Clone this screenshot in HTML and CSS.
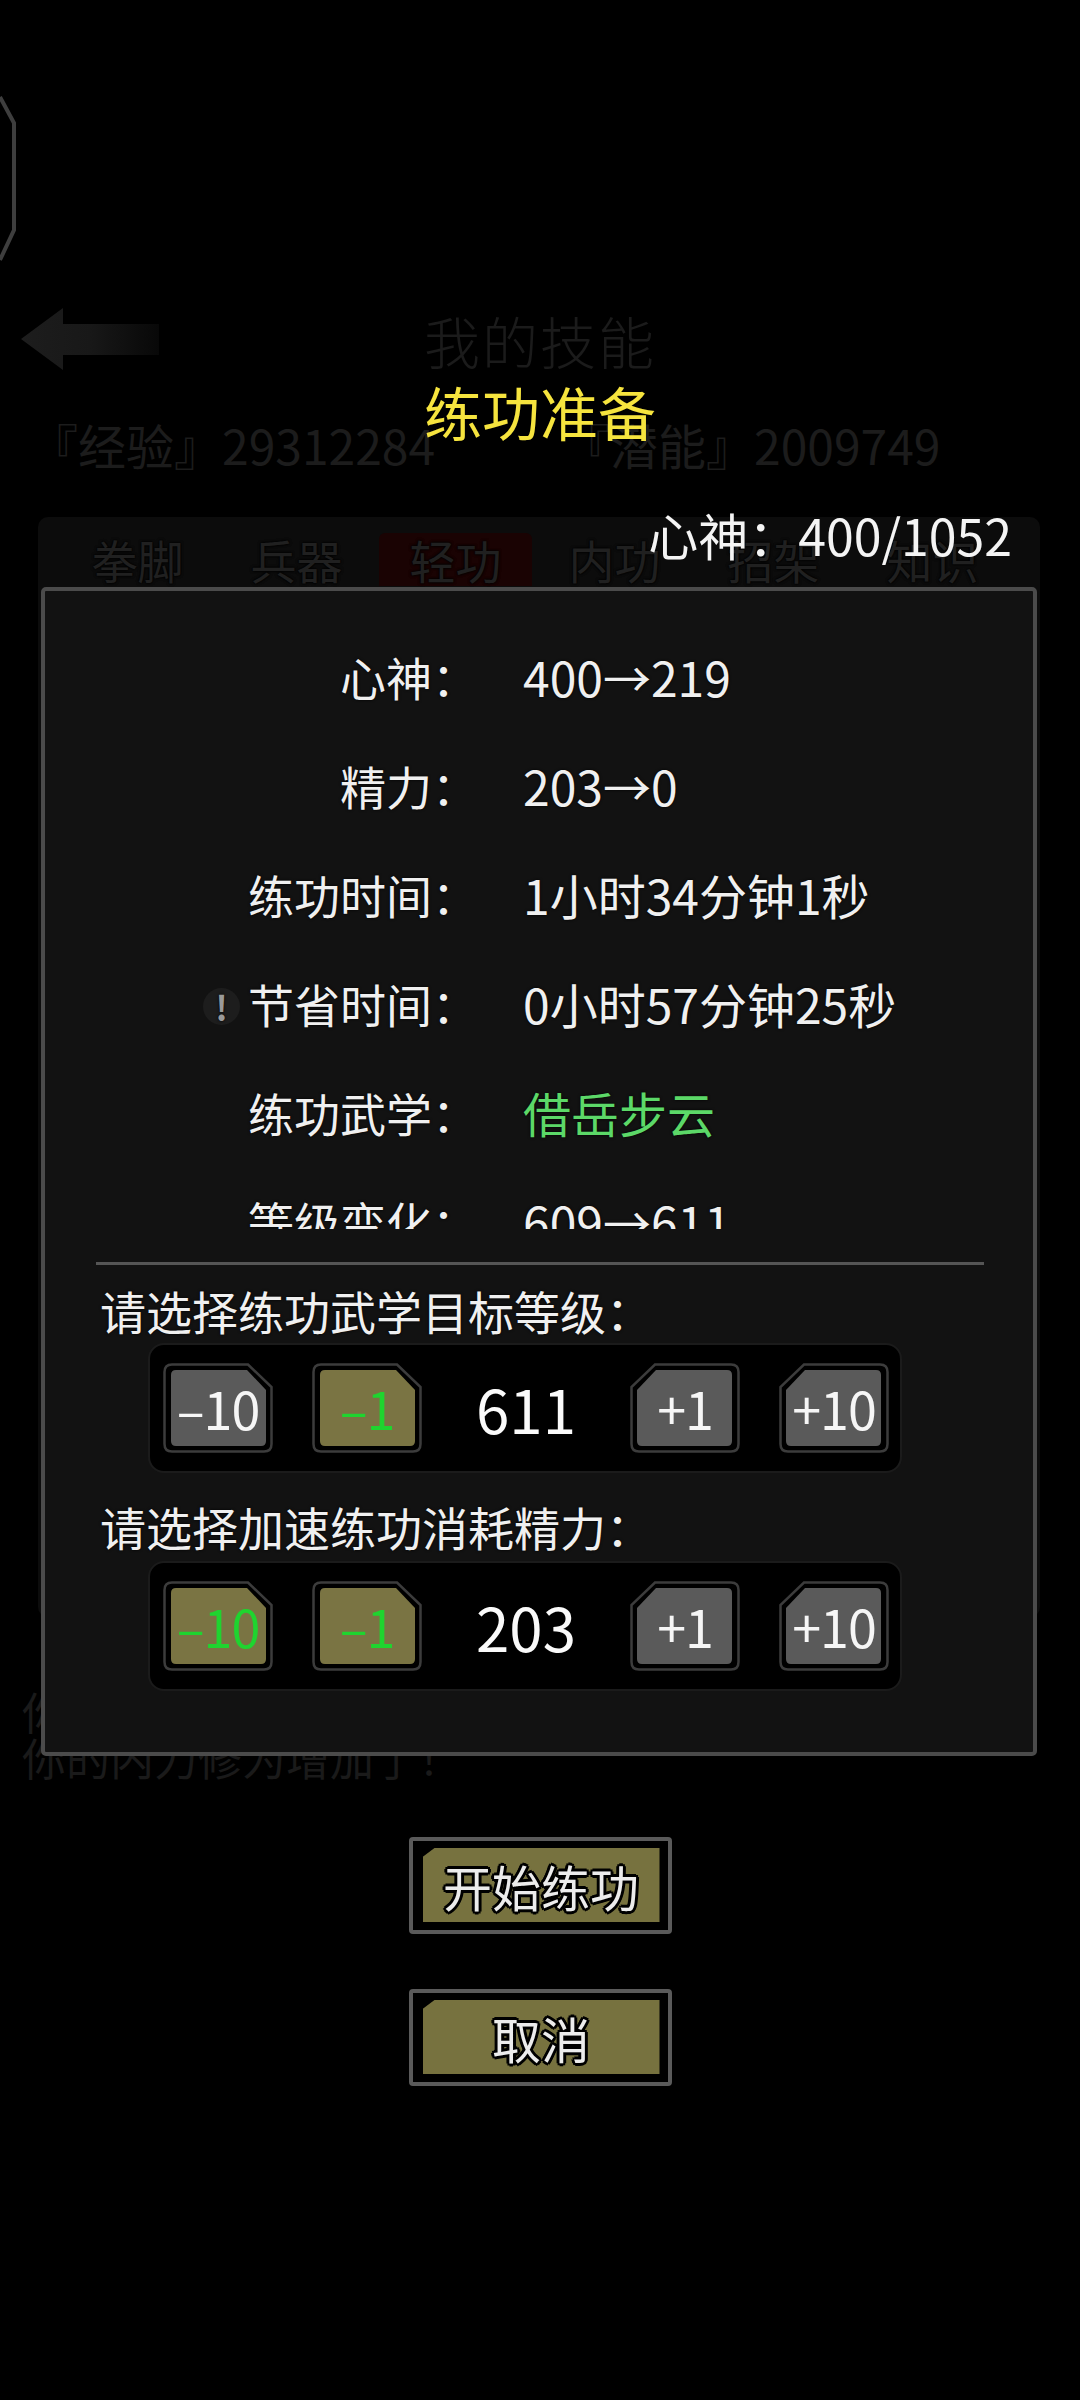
FILE: index.html
```html
<!DOCTYPE html>
<html lang="zh-CN">
<head>
  <meta charset="UTF-8">
  <meta name="viewport" content="width=device-width, initial-scale=1.0">
  <title>练功准备</title>
  <link rel="stylesheet" href="styles.css">
</head>
<body>
  <!-- dimmed game screen under the dialog -->
  <div class="screen">
    <svg class="edge" width="20" height="175" viewBox="0 0 20 175">
      <path d="M0 7 L14 33 V140 L0 170" fill="none" stroke="#3e3e3e" stroke-width="4"/>
    </svg>

    <header class="topbar">
      <svg class="back" width="140" height="64" viewBox="0 0 140 64">
        <defs>
          <linearGradient id="fade" x1="0" x2="1" y1="0" y2="0">
            <stop offset="0" stop-color="#1d1d1d"/>
            <stop offset="0.5" stop-color="#181818"/>
            <stop offset="1" stop-color="#080808"/>
          </linearGradient>
        </defs>
        <path d="M0 31 L42 0 V16 H138 V47 H42 V62 Z" fill="url(#fade)"/>
      </svg>
      <h1>我的技能</h1>
    </header>

    <div class="stats">
      <span>『经验』29312284</span>
      <span>『潜能』2009749</span>
    </div>

    <section class="tabs-box">
      <nav class="tabs">
        <span>拳脚</span>
        <span>兵器</span>
        <span class="on">轻功</span>
        <span>内功</span>
        <span>招架</span>
        <span>知识</span>
      </nav>
    </section>

    <p class="log">你的轻功修为增加了！</p>
    <p class="log">你的内力修为增加了！</p>
  </div>

  <div class="overlay">
    <h2 class="title">练功准备</h2>
    <div class="mind">心神：400/1052</div>

    <div class="panel">
      <div class="rows">
        <div class="row"><span class="k">心神：</span><span class="v">400→219</span></div>
        <div class="row"><span class="k">精力：</span><span class="v">203→0</span></div>
        <div class="row"><span class="k">练功时间：</span><span class="v">1小时34分钟1秒</span></div>
        <div class="row"><span class="k"><i class="tip">!</i>节省时间：</span><span class="v">0小时57分钟25秒</span></div>
        <div class="row"><span class="k">练功武学：</span><span class="v green">借岳步云</span></div>
        <div class="row"><span class="k">等级变化：</span><span class="v">609→611</span></div>
      </div>

      <hr class="rule">

      <p class="ask">请选择练功武学目标等级：</p>
      <div class="stepper">
        <button class="step"><svg width="110" height="90" viewBox="0 0 110 90"><path class="rim" d="M9 1.5 H85 L108.5 24 V81 Q108.5 88.5 101 88.5 H9 Q1.5 88.5 1.5 81 V9 Q1.5 1.5 9 1.5 Z"/><path class="face" d="M13 7 H84 L103 27 V78 Q103 83 98 83 H13 Q8 83 8 78 V12 Q8 7 13 7 Z"/></svg><span>–10</span></button>
        <button class="step on"><svg width="110" height="90" viewBox="0 0 110 90"><path class="rim" d="M9 1.5 H85 L108.5 24 V81 Q108.5 88.5 101 88.5 H9 Q1.5 88.5 1.5 81 V9 Q1.5 1.5 9 1.5 Z"/><path class="face" d="M13 7 H84 L103 27 V78 Q103 83 98 83 H13 Q8 83 8 78 V12 Q8 7 13 7 Z"/></svg><span>–1</span></button>
        <div class="value">611</div>
        <button class="step plus"><svg width="110" height="90" viewBox="0 0 110 90"><path class="rim" d="M9 1.5 H85 L108.5 24 V81 Q108.5 88.5 101 88.5 H9 Q1.5 88.5 1.5 81 V9 Q1.5 1.5 9 1.5 Z"/><path class="face" d="M13 7 H84 L103 27 V78 Q103 83 98 83 H13 Q8 83 8 78 V12 Q8 7 13 7 Z"/></svg><span>+1</span></button>
        <button class="step plus"><svg width="110" height="90" viewBox="0 0 110 90"><path class="rim" d="M9 1.5 H85 L108.5 24 V81 Q108.5 88.5 101 88.5 H9 Q1.5 88.5 1.5 81 V9 Q1.5 1.5 9 1.5 Z"/><path class="face" d="M13 7 H84 L103 27 V78 Q103 83 98 83 H13 Q8 83 8 78 V12 Q8 7 13 7 Z"/></svg><span>+10</span></button>
      </div>

      <p class="ask second">请选择加速练功消耗精力：</p>
      <div class="stepper tight">
        <button class="step on"><svg width="110" height="90" viewBox="0 0 110 90"><path class="rim" d="M9 1.5 H85 L108.5 24 V81 Q108.5 88.5 101 88.5 H9 Q1.5 88.5 1.5 81 V9 Q1.5 1.5 9 1.5 Z"/><path class="face" d="M13 7 H84 L103 27 V78 Q103 83 98 83 H13 Q8 83 8 78 V12 Q8 7 13 7 Z"/></svg><span>–10</span></button>
        <button class="step on"><svg width="110" height="90" viewBox="0 0 110 90"><path class="rim" d="M9 1.5 H85 L108.5 24 V81 Q108.5 88.5 101 88.5 H9 Q1.5 88.5 1.5 81 V9 Q1.5 1.5 9 1.5 Z"/><path class="face" d="M13 7 H84 L103 27 V78 Q103 83 98 83 H13 Q8 83 8 78 V12 Q8 7 13 7 Z"/></svg><span>–1</span></button>
        <div class="value">203</div>
        <button class="step plus"><svg width="110" height="90" viewBox="0 0 110 90"><path class="rim" d="M9 1.5 H85 L108.5 24 V81 Q108.5 88.5 101 88.5 H9 Q1.5 88.5 1.5 81 V9 Q1.5 1.5 9 1.5 Z"/><path class="face" d="M13 7 H84 L103 27 V78 Q103 83 98 83 H13 Q8 83 8 78 V12 Q8 7 13 7 Z"/></svg><span>+1</span></button>
        <button class="step plus"><svg width="110" height="90" viewBox="0 0 110 90"><path class="rim" d="M9 1.5 H85 L108.5 24 V81 Q108.5 88.5 101 88.5 H9 Q1.5 88.5 1.5 81 V9 Q1.5 1.5 9 1.5 Z"/><path class="face" d="M13 7 H84 L103 27 V78 Q103 83 98 83 H13 Q8 83 8 78 V12 Q8 7 13 7 Z"/></svg><span>+10</span></button>
      </div>
    </div>

    <button class="big start"><span class="fill">开始练功</span></button>
    <button class="big cancel"><span class="fill">取消</span></button>
  </div>
</body>
</html>
```

FILE: styles.css
```css
body {
  margin: 0;
  width: 1080px;
  height: 2400px;
  overflow: hidden;
  position: relative;
  background-color: #000;
  font-family: "Noto Sans CJK SC", "Noto Sans", sans-serif;
  color: #f0f0f0;
}

/* ---- dimmed screen behind ---- */
.screen {
  height: 2400px;
}

.edge {
  display: block;
  margin-top: 90px;
}

.topbar {
  display: grid;
  grid-template-columns: 1fr auto 1fr;
  align-items: center;
  height: 80px;
  margin-top: 35px;
}

.back {
  display: block;
  margin-left: 21px;
}

.topbar h1 {
  margin: 0;
  font-size: 56px;
  line-height: 56px;
  font-weight: 300;
  color: #1b1b1b;
  letter-spacing: 2px;
}

.stats {
  display: grid;
  grid-template-columns: 532px auto;
  margin-top: 41px;
  padding-left: 30px;
  font-size: 48px;
  line-height: 46px;
  color: #1c1c1c;
}

.tabs-box {
  margin: 50px 40px 0 38px;
  height: 1100px;
  background-color: #0c0c0c;
  border-radius: 10px;
}

.tabs {
  display: flex;
  padding: 16px 0 0 20px;
}

.tabs span {
  width: 159px;
  height: 53px;
  text-align: center;
  font-size: 46px;
  line-height: 53px;
  color: #202020;
  text-shadow: 0 0 3px #000, 0 0 3px #000;
}

.tabs span.on {
  width: 153px;
  margin: 0 3px;
  background-color: #1a0303;
  border-radius: 6px 6px 0 0;
}

.log {
  margin: 0 0 0 22px;
  font-size: 44px;
  line-height: 46px;
  color: #1a1a1a;
}

.log:first-of-type {
  margin-top: 71px;
}

/* ---- dialog over it ---- */
.overlay {
  position: absolute;
  inset: 0;
  padding-top: 382px;
}

.title {
  margin: 0;
  text-align: center;
  font-size: 58px;
  line-height: 58px;
  font-weight: 400;
  color: #f6e43e;
}

.mind {
  margin-top: 70px;
  padding-right: 68px;
  text-align: right;
  font-size: 50px;
  line-height: 48px;
  color: #f4f4f4;
}

.panel {
  margin: 29px 43px 0 41px;
  padding-bottom: 61px;
  background-color: #121212;
  border: 4px solid #4b4b4b;
  border-radius: 5px;
}

.rows {
  box-sizing: border-box;
  height: 638px;
  padding-top: 30px;
  overflow: hidden;
}

.row {
  display: grid;
  grid-template-columns: 433px auto;
  column-gap: 45px;
  align-items: center;
  height: 109px;
  font-size: 46px;
  line-height: 46px;
  text-shadow: 0 0 3px #000;
}

.row .k {
  text-align: right;
  white-space: nowrap;
}

.row .v {
  font-size: 48px;
}

.green {
  color: #5cd868;
}

.tip {
  display: inline-block;
  width: 37px;
  height: 37px;
  margin-right: 8px;
  vertical-align: 2px;
  border-radius: 50%;
  background-color: #1d1d1d;
  color: #9a9a9a;
  font-style: normal;
  font-weight: 700;
  font-size: 34px;
  line-height: 37px;
  text-align: center;
}

.rule {
  height: 3px;
  margin: 33px 49px 0 51px;
  border: none;
  background-color: #555;
}

.ask {
  margin: 22px 0 0 55px;
  font-size: 46px;
  line-height: 46px;
  text-shadow: 0 0 3px #000;
}

.ask.second {
  margin-top: 30px;
}

.stepper {
  box-sizing: border-box;
  display: flex;
  align-items: center;
  gap: 39px;
  width: 754px;
  height: 130px;
  margin: 10px 0 0 103px;
  padding: 0 10px 0 13px;
  background-color: #000;
  border: 2px solid #1b1b1b;
  border-radius: 16px;
}

.stepper.tight {
  margin-top: 12px;
}

.step {
  display: grid;
  place-items: center;
  width: 110px;
  height: 90px;
  padding: 0;
  border: none;
  background: none;
  font-family: inherit;
  font-size: 52px;
  color: #f6f6f6;
}

.step svg,
.step span {
  grid-area: 1 / 1;
}

.step svg {
  display: block;
}

.step.plus svg {
  transform: scaleX(-1);
}

.step span {
  position: relative;
  line-height: 1;
  letter-spacing: -1px;
}

.rim {
  fill: #000;
  stroke: #3c3c3c;
  stroke-width: 2.5;
}

.face {
  fill: #5a5a5a;
}

.step.on .face {
  fill: #7a7443;
}

.step.on span {
  color: #1fd42f;
}

.value {
  width: 130px;
  text-align: center;
  font-size: 60px;
  line-height: 60px;
  color: #fafafa;
}

.big {
  display: block;
  box-sizing: border-box;
  width: 263px;
  height: 97px;
  margin: 81px auto 0;
  padding: 7px 8px 8px 10px;
  background-color: #000;
  border: 4px solid #5a5a5a;
  border-radius: 4px;
  font-family: inherit;
}

.big.cancel {
  margin-top: 55px;
}

.big .fill {
  display: flex;
  align-items: center;
  justify-content: center;
  height: 100%;
  background-color: #77723f;
  clip-path: polygon(0 9px, 12px 0, 100% 0, 100% 100%, 0 100%);
  font-size: 49px;
  color: #ececec;
  text-shadow: -2px -2px 0 #000, 2px -2px 0 #000, -2px 2px 0 #000, 2px 2px 0 #000,
    0 -3px 0 #000, 0 3px 0 #000, -3px 0 0 #000, 3px 0 0 #000;
}
```
